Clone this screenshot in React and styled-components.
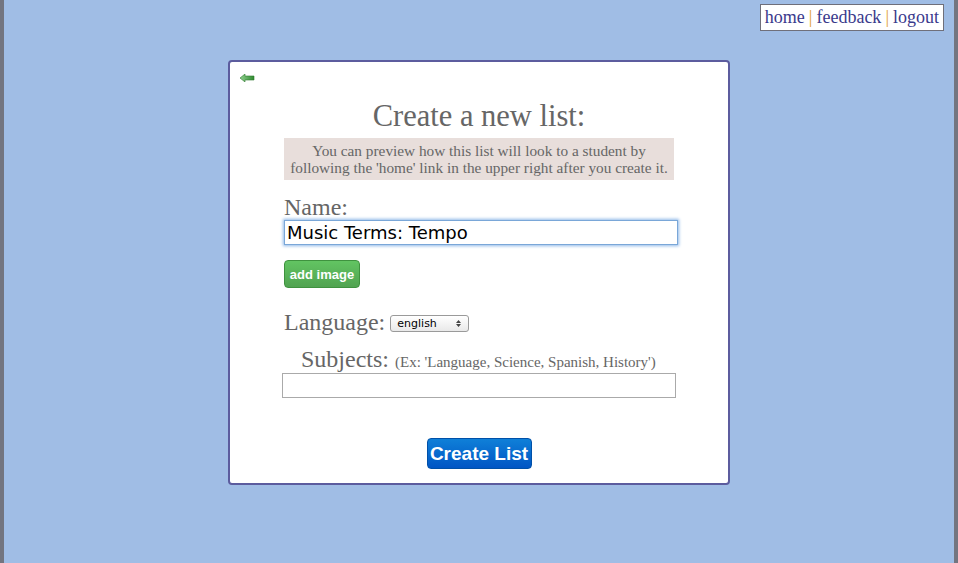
import React from 'react'
import styled, { createGlobalStyle } from 'styled-components'

const GlobalStyle = createGlobalStyle`
  html, body {
    margin: 0;
    padding: 0;
  }
  body {
    font-family: "Liberation Serif", serif;
    background: #737580;
  }
`

const Page = styled.div`
  height: 563px;
  margin: 0 4px;
  background: #a0bde5;
  position: relative;
  display: flex;
  justify-content: center;
  padding-top: 60px;
  box-sizing: border-box;
`

const Nav = styled.div`
  position: absolute;
  top: 4px;
  right: 10px;
  background: #fff;
  border: 1px solid #6f6f7a;
  padding: 3px 4px 3px 4px;
  font-size: 18px;
  color: #3a3a8c;
  line-height: 19px;
`

const NavLink = styled.a`
  color: #3a3a8c;
  text-decoration: none;
`

const Sep = styled.span`
  color: #e0a030;
  margin: 0 4px;
`

const Card = styled.div`
  width: 498px;
  height: 421px;
  background: #fff;
  border: 2px solid #5c5c9e;
  border-radius: 4px;
  position: relative;
  display: flex;
  flex-direction: column;
  align-items: center;
`

const Back = styled.svg`
  position: absolute;
  top: 12px;
  left: 10px;
`

const Title = styled.h1`
  margin: 37px 0 0 0;
  font-size: 30.5px;
  font-weight: normal;
  color: #666;
  line-height: 34px;
`

const Form = styled.div`
  width: 396px;
  margin-left: 6px;
  display: flex;
  flex-direction: column;
`

const Note = styled.div`
  margin-top: 5px;
  background: #e8dedb;
  color: #666;
  font-size: 15.3px;
  line-height: 17px;
  text-align: center;
  padding: 4px 0;
  width: 390px;
`

const Label = styled.label`
  font-size: 24px;
  color: #666;
  line-height: 24px;
`

const NameLabel = styled(Label)`
  margin-top: 15px;
`

const NameInput = styled.input`
  margin-top: 1px;
  width: 394px;
  height: 25px;
  box-sizing: border-box;
  border: 1px solid #7aa7d8;
  outline: none;
  box-shadow: 0 0 3px 1px #8fb8e8;
  font-family: "DejaVu Sans", sans-serif;
  font-size: 18px;
  padding: 0 2px;
  color: #000;
`

const GreenButton = styled.button`
  margin-top: 15px;
  align-self: flex-start;
  height: 28px;
  width: 76px;
  padding: 0;
  border: 1px solid #3f923f;
  border-radius: 4px;
  background: linear-gradient(#62c462, #51a351);
  color: #fff;
  font-family: "Liberation Sans", sans-serif;
  font-weight: bold;
  font-size: 13px;
`

const LangRow = styled.div`
  margin-top: 22px;
  display: flex;
  align-items: center;
  gap: 5px;
`

const SelectWrap = styled.div`
  position: relative;
  margin-top: 3px;
`

const Select = styled.select`
  appearance: none;
  width: 79px;
  height: 17px;
  font-family: "DejaVu Sans", sans-serif;
  font-size: 11px;
  color: #000;
  border: 1px solid #9a9a9a;
  border-radius: 3px;
  background: linear-gradient(#fff, #e9e9e9);
  padding: 0 0 0 6px;
  display: block;
`

const Arrows = styled.svg`
  position: absolute;
  right: 8px;
  top: 5px;
  pointer-events: none;
`

const SubjRow = styled.div`
  margin-top: 13px;
  margin-left: 17px;
  display: flex;
  align-items: baseline;
  gap: 6px;
`

const Hint = styled.span`
  font-size: 15px;
  color: #666;
`

const SubjInput = styled.input`
  margin-top: 2px;
  margin-left: -2px;
  width: 394px;
  height: 25px;
  box-sizing: border-box;
  border: 1px solid #aaa;
  outline: none;
`

const BlueButton = styled.button`
  margin-top: 40px;
  height: 31px;
  width: 105px;
  padding: 0;
  border: 1px solid #0050a8;
  border-radius: 4px;
  background: linear-gradient(#0f80d8, #0055c4);
  color: #fff;
  font-family: "Liberation Sans", sans-serif;
  font-weight: bold;
  font-size: 19px;
`

export default function App() {
  return (
    <>
      <GlobalStyle />
      <Page>
        <Nav>
          <NavLink href="#">home</NavLink>
          <Sep>|</Sep>
          <NavLink href="#">feedback</NavLink>
          <Sep>|</Sep>
          <NavLink href="#">logout</NavLink>
        </Nav>
        <Card>
          <Back width="15" height="8" viewBox="0 0 15 8">
            <defs>
              <linearGradient id="ag" x1="0" x2="1">
                <stop offset="0" stopColor="#8fd08f" />
                <stop offset="1" stopColor="#2f8a2f" />
              </linearGradient>
            </defs>
            <path d="M0 4 L5 0 L5 2 L14 2 L14 6 L5 6 L5 8 Z" fill="url(#ag)" stroke="#2f7a2f" strokeWidth="0.6" />
          </Back>
          <Title>Create a new list:</Title>
          <Form>
            <Note>
              You can preview how this list will look to a student by
              <br />
              following the 'home' link in the upper right after you create it.
            </Note>
            <NameLabel>Name:</NameLabel>
            <NameInput defaultValue="Music Terms: Tempo" />
            <GreenButton>add image</GreenButton>
            <LangRow>
              <Label>Language:</Label>
              <SelectWrap>
                <Select defaultValue="english">
                  <option value="english">english</option>
                </Select>
                <Arrows width="5" height="7" viewBox="0 0 5 7">
                  <path d="M0 3 L2.5 0 L5 3 Z M0 4 L2.5 7 L5 4 Z" fill="#444" />
                </Arrows>
              </SelectWrap>
            </LangRow>
            <SubjRow>
              <Label>Subjects:</Label>
              <Hint>(Ex: 'Language, Science, Spanish, History')</Hint>
            </SubjRow>
            <SubjInput />
          </Form>
          <BlueButton>Create List</BlueButton>
        </Card>
      </Page>
    </>
  )
}
